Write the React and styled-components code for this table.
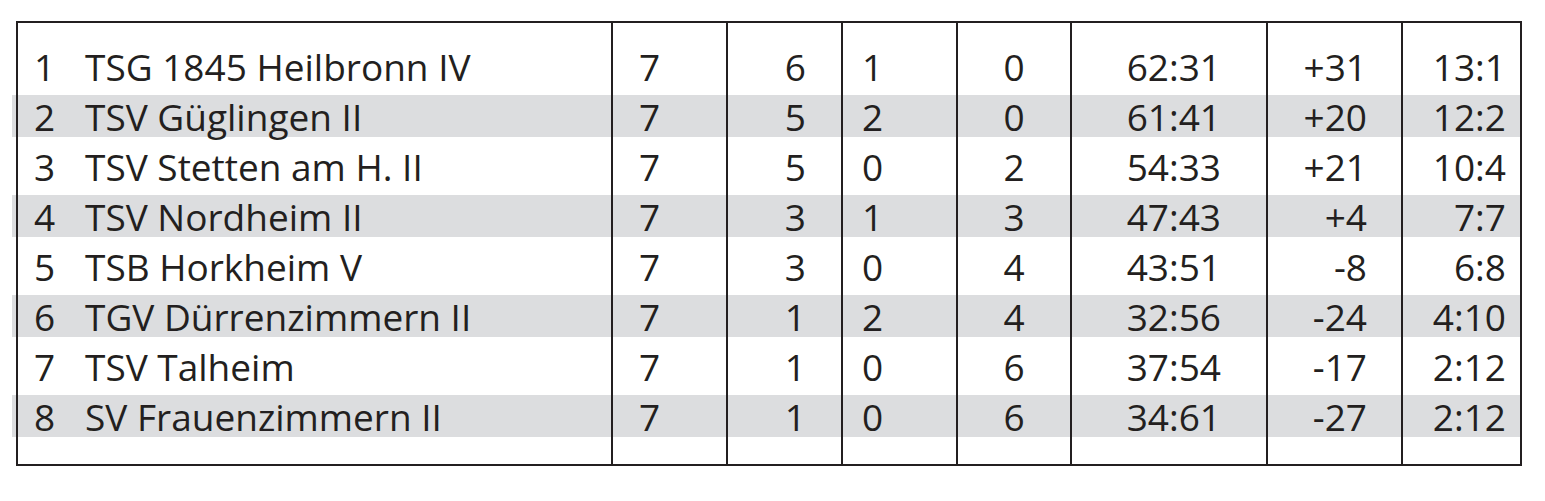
import React from "react";
import styled, { createGlobalStyle } from "styled-components";

const INK = "#231f20";
const STRIPE = "#dcdddf";

const GlobalStyle = createGlobalStyle`
  html { background: #ffffff; }
  html, body { margin: 0; padding: 0; }
  body {
    font-family: "Open Sans", "Noto Sans", "Liberation Sans", sans-serif;
    color: ${INK};
  }
`;

const Page = styled.main`
  padding: 21px 0 12px 16px;
`;

const Table = styled.div`
  width: 1502px;
  border: 2px solid ${INK};
  display: flex;
  flex-direction: column;
`;

const Row = styled.div`
  display: grid;
  grid-template-columns: 595px 115px 115px 115px 114px 196px 135px 117px;
  height: ${(p) => p.$h}px;
`;

const Cell = styled.div`
  box-sizing: border-box;
  border-right: 2px solid ${INK};
  padding: ${(p) => (p.$spacer ? "0" : "4px 0")};
  display: flex;
  min-width: 0;
  &:last-child {
    border-right: none;
  }
`;

const Fill = styled.div`
  flex: 1;
  display: flex;
  align-items: center;
  justify-content: ${(p) => p.$align || "flex-start"};
  padding: 0 ${(p) => p.$pr || 0}px 0 ${(p) => p.$pl || 0}px;
  background: ${(p) => (p.$striped ? STRIPE : "transparent")};
  font-size: 37px;
  line-height: 1;
  white-space: nowrap;
`;

/* the first column's stripe runs out past the frame, under its line */
const LeadFill = styled(Fill)`
  margin-left: -6px;
  position: relative;
  z-index: -1;
`;

const Rank = styled.span`
  display: inline-block;
  width: 51px;
`;

const Team = styled.span``;

const COLUMNS = [
  { key: "sp", align: "flex-start", pl: 26 },
  { key: "s", align: "flex-end", pr: 35 },
  { key: "u", align: "flex-start", pl: 19 },
  { key: "n", align: "center" },
  { key: "tore", align: "flex-end", pr: 45 },
  { key: "diff", align: "flex-end", pr: 34 },
  { key: "pkt", align: "flex-end", pr: 14 },
];

const ROWS = [
  { rank: 1, team: "TSG 1845 Heilbronn IV", sp: 7, s: 6, u: 1, n: 0, tore: "62:31", diff: "+31", pkt: "13:1" },
  { rank: 2, team: "TSV Güglingen II", sp: 7, s: 5, u: 2, n: 0, tore: "61:41", diff: "+20", pkt: "12:2" },
  { rank: 3, team: "TSV Stetten am H. II", sp: 7, s: 5, u: 0, n: 2, tore: "54:33", diff: "+21", pkt: "10:4" },
  { rank: 4, team: "TSV Nordheim II", sp: 7, s: 3, u: 1, n: 3, tore: "47:43", diff: "+4", pkt: "7:7" },
  { rank: 5, team: "TSB Horkheim V", sp: 7, s: 3, u: 0, n: 4, tore: "43:51", diff: "-8", pkt: "6:8" },
  { rank: 6, team: "TGV Dürrenzimmern II", sp: 7, s: 1, u: 2, n: 4, tore: "32:56", diff: "-24", pkt: "4:10" },
  { rank: 7, team: "TSV Talheim", sp: 7, s: 1, u: 0, n: 6, tore: "37:54", diff: "-17", pkt: "2:12" },
  { rank: 8, team: "SV Frauenzimmern II", sp: 7, s: 1, u: 0, n: 6, tore: "34:61", diff: "-27", pkt: "2:12" },
];

function SpacerRow({ h }) {
  return (
    <Row $h={h}>
      {Array.from({ length: 8 }).map((_, i) => (
        <Cell key={i} $spacer />
      ))}
    </Row>
  );
}

function TeamRow({ row, striped }) {
  return (
    <Row $h={50}>
      <Cell>
        <LeadFill $striped={striped} $pl={22}>
          <Rank>{row.rank}</Rank>
          <Team>{row.team}</Team>
        </LeadFill>
      </Cell>
      {COLUMNS.map((c) => (
        <Cell key={c.key}>
          <Fill $striped={striped} $align={c.align} $pl={c.pl} $pr={c.pr}>
            {row[c.key]}
          </Fill>
        </Cell>
      ))}
    </Row>
  );
}

export default function App() {
  return (
    <>
      <GlobalStyle />
      <Page>
        <Table>
          <SpacerRow h={18} />
          {ROWS.map((r, i) => (
            <TeamRow key={r.rank} row={r} striped={i % 2 === 1} />
          ))}
          <SpacerRow h={23} />
        </Table>
      </Page>
    </>
  );
}
